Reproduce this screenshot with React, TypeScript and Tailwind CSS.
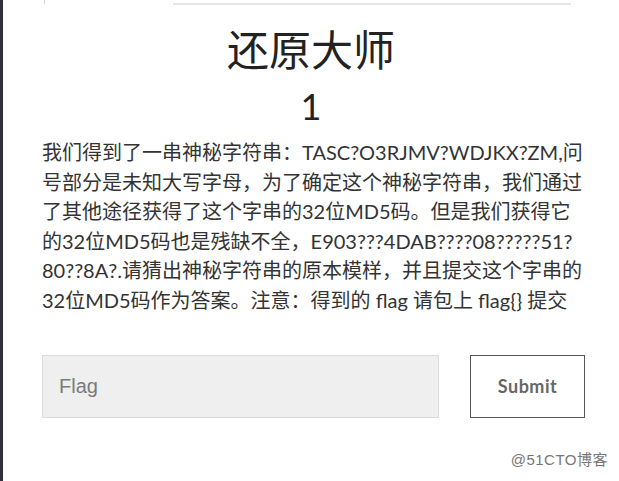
const cjk = "font-['Lato','Noto_Sans_CJK_SC',sans-serif]";

const desc =
  "我们得到了一串神秘字符串：TASC?O3RJMV?WDJKX?ZM,问号部分是未知大写字母，为了确定这个神秘字符串，我们通过了其他途径获得了这个字串的32位MD5码。但是我们获得它的32位MD5码也是残缺不全，E903???4DAB????08?????51?80??8A?.请猜出神秘字符串的原本模样，并且提交这个字串的32位MD5码作为答案。注意：得到的 flag 请包上 flag{} 提交";

const TopBar = () => {
  return (
    <div className="flex h-[6px] items-start">
      <div className="ml-[41px] h-[4px] w-[129px] border-l border-[#d6d6d6]" />
      <div className="h-[5px] w-[398px] border-b-2 border-[#e6e6e6]" />
    </div>
  );
};

const App = () => {
  return (
    <div className="relative h-[481px] w-[619px] overflow-hidden border-l-[3px] border-[#2e2e3c] bg-white">
      <TopBar />
      <h1
        className={`mt-[22px] text-center text-[42px] leading-[44px] text-[#222] ${cjk}`}
      >
        还原大师
      </h1>
      <h2 className="mt-[14px] text-center font-['Lato',sans-serif] text-[36px] leading-[40px] text-[#222]">
        1
      </h2>
      <p
        className={`mt-[12px] ml-[39px] w-[544px] text-[20px] leading-[29.5px] text-[#333] ${cjk}`}
      >
        {desc}
      </p>
      <form className="mt-[40px] ml-[39px] flex items-center gap-[31px]">
        <input
          placeholder="Flag"
          className="h-[63px] w-[397px] border border-[#dcdcdc] bg-[#efefef] px-[16px] font-['Liberation_Sans',sans-serif] text-[20px] text-[#333] outline-none placeholder:text-[#7a7a7a]"
        />
        <button
          type="button"
          className="h-[63px] w-[115px] border border-[#555] bg-white font-['Lato',sans-serif] text-[18px] font-bold tracking-[0.5px] text-[#666]"
        >
          Submit
        </button>
      </form>
      <div className="absolute right-[11px] bottom-[10px] font-['Liberation_Sans','Noto_Sans_CJK_SC',sans-serif] text-[15px] tracking-[0.5px] text-[#777]">
        @51CTO博客
      </div>
    </div>
  );
};

export default App;
